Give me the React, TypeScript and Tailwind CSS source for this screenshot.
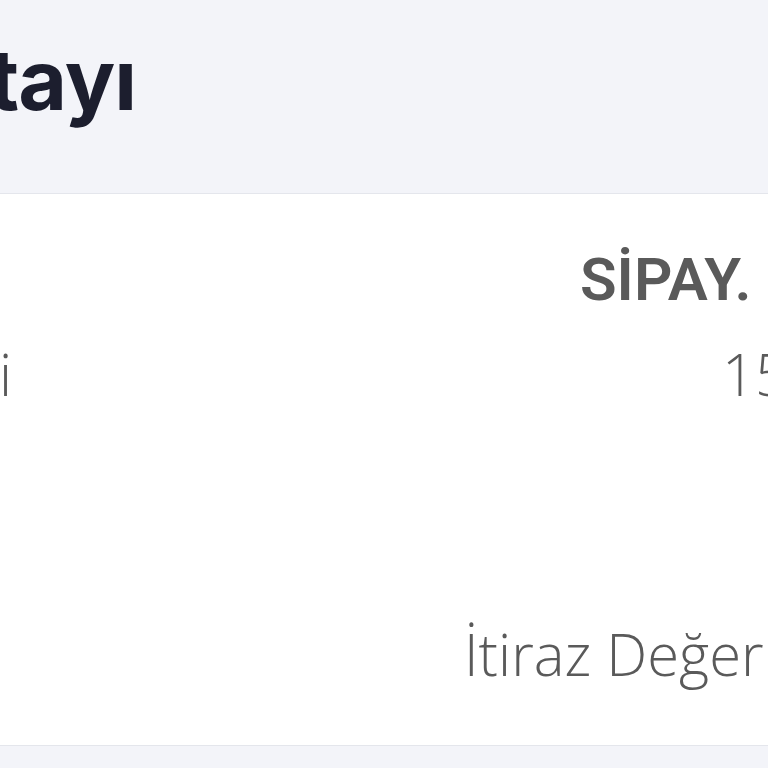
export default function App() {
  return (
    <div className="flex h-[768px] w-[768px] flex-col overflow-hidden bg-[#f3f4f9]">
      {/* Başlık */}
      <div className="flex h-[193px] shrink-0 items-start">
        <div className="flex w-[136px] justify-end overflow-visible whitespace-nowrap">
          <h1 className="mt-[30px] font-['Inter',sans-serif] text-[84px] font-bold leading-[100px] tracking-[-1px] text-[#1c1e2e]">
            İşlem Detayı
          </h1>
        </div>
      </div>

      {/* Detay kartı */}
      <div className="flex h-[553px] shrink-0 flex-col border-y border-[#e4e6ec] bg-white font-['Open_Sans',sans-serif] text-[#5a5a5a]">
        <div className="mt-[46px] flex whitespace-nowrap pl-[580px]">
          <span className="font-['Roboto',sans-serif] text-[60px] font-semibold leading-[80px]">
            SİPAY.
          </span>
        </div>

        <div className="mt-[14px] flex items-end whitespace-nowrap">
          <div className="flex w-[12px] justify-end">
            <span className="text-[58px] font-light leading-[80px]">Üye İşyeri</span>
          </div>
          <span className="ml-[710px] text-[58px] font-light leading-[80px]">15.03.2024</span>
        </div>

        <div className="mt-[200px] flex whitespace-nowrap pl-[464px]">
          <span className="text-[58px] font-light leading-[80px]">İtiraz Değerlendirmede</span>
        </div>
      </div>
    </div>
  );
}
